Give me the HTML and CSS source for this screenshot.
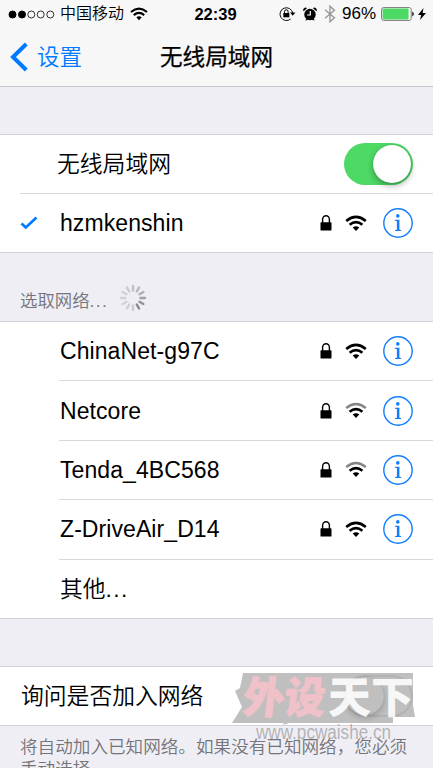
FILE: index.html
```html
<!DOCTYPE html>
<html lang="zh-CN">
<head>
<meta charset="utf-8">
<title>无线局域网</title>
<link rel="stylesheet" href="styles.css">
</head>
<body>
<svg class="defs" aria-hidden="true">
  <symbol id="wifi" viewBox="0 0 22 17">
    <path d="M1.2 6Q11-2.1 20.8 6" fill="none" stroke="currentColor" stroke-width="2.6"/>
    <path d="M4.6 9.8Q11 4.5 17.4 9.8" fill="none" stroke="currentColor" stroke-width="2.6"/>
    <path d="M7.7 12.6Q11 10 14.3 12.6L11 16Z" fill="currentColor"/>
  </symbol>
  <symbol id="wifi-weak" viewBox="0 0 22 17">
    <path d="M1.2 6Q11-2.1 20.8 6" fill="none" stroke="#858585" stroke-width="2.4"/>
    <path d="M4.6 9.8Q11 4.5 17.4 9.8" fill="none" stroke="currentColor" stroke-width="2.6"/>
    <path d="M7.7 12.6Q11 10 14.3 12.6L11 16Z" fill="currentColor"/>
  </symbol>
  <symbol id="lock" viewBox="0 0 12 16">
    <path d="M2.6 8V4.4a3.4 3.6 0 0 1 6.8 0V8" fill="none" stroke="#000" stroke-width="1.4"/>
    <rect x=".5" y="7.3" width="11" height="8.2" rx=".6"/>
  </symbol>
  <symbol id="info" viewBox="0 0 30 30">
    <circle cx="15" cy="15" r="14.2" fill="none" stroke="#117dff" stroke-width="1.4"/>
    <circle cx="14.8" cy="7.9" r="1.8" fill="#117dff"/>
    <path d="M11.9 11.7h4.5v10.1l1.7.3v.9h-6v-.9l1.8-.3v-8.7l-2-.4z" fill="#117dff"/>
  </symbol>
</svg>

<header class="header">
  <div class="status">
    <div class="carrier">
      <svg class="signal" viewBox="0 0 47 9"><g stroke="#000"><circle cx="4.5" cy="4.5" r="3.5"/><circle cx="14" cy="4.5" r="3.5"/><g fill="none" stroke-width=".8"><circle cx="23.3" cy="4.5" r="3.5"/><circle cx="32.7" cy="4.5" r="3.5"/><circle cx="42.3" cy="4.5" r="3.5"/></g></g></svg>
      <span class="operator">中国移动</span>
      <svg class="status-wifi"><use href="#wifi"/></svg>
    </div>
    <time class="clock">22:39</time>
    <div class="indicators">
      <svg class="rotation" viewBox="0 0 17 16"><path d="M11.6 13A6.4 6.4 0 1 1 13.7 7" fill="none" stroke="#111"/><path d="M11 6.6h5.4l-2.7 3.2z"/><rect x="4.3" y="7" width="6" height="4.3"/><path d="M5.5 7V5.6a1.8 1.8 0 0 1 3.6 0V7" fill="none" stroke="#000"/></svg>
      <svg class="alarm" viewBox="0 0 14 14"><circle cx="7" cy="7.5" r="5.7"/><path d="M.6 4.2a2.3 2.3 0 0 1 3.4-3zM13.4 4.2a2.3 2.3 0 0 0-3.4-3zM2.1 13.3l2-2 1 .9-1 1.1zM11.9 13.3l-2-2-1 .9 1 1.1z"/><path d="M7.3 4v4H4" fill="none" stroke="#fff" stroke-width="1.2"/></svg>
      <svg class="bluetooth" viewBox="0 0 12 18"><path d="M1 4.8l9.4 8L6 16.8V1.2l4.4 4L1 13.2" fill="none" stroke="#999" stroke-width="1.4"/></svg>
      <span class="percent">96%</span>
      <svg class="battery" viewBox="0 0 34 14"><rect x=".6" y=".6" width="29.6" height="12.8" rx="2" fill="#fff" stroke="#777"/><rect x="1.6" y="1.6" width="26" height="10.8" rx=".8" fill="#4cd964"/><path d="M31.3 4.5q3 2.5 0 5z"/></svg>
      <svg class="bolt" viewBox="0 0 8 12"><path d="M5.5 0L0 7h3.2L2 12l6-7H4.6z"/></svg>
    </div>
  </div>
  <nav class="nav">
    <a class="back"><svg class="chevron" viewBox="0 0 18 30"><path d="M16.3 2L3 15l13.3 13" fill="none" stroke="#007aff" stroke-width="4"/></svg><span>设置</span></a>
    <h1 class="title">无线局域网</h1>
  </nav>
</header>

<main>
  <section class="group current">
    <div class="row switch-row"><span class="name cjk">无线局域网</span><span class="toggle on"><span class="knob"></span></span></div>
    <div class="row">
      <svg class="check" viewBox="0 0 18 14"><path d="M1.5 7.5l4.3 4L16.5 1.4" fill="none" stroke="#007aff" stroke-width="2.7"/></svg>
      <span class="name">hzmkenshin</span><svg class="lock"><use href="#lock"/></svg><svg class="wifi"><use href="#wifi"/></svg><svg class="info"><use href="#info"/></svg>
    </div>
  </section>

  <div class="section-head">
    <span>选取网络<span class="dots">...</span></span>
    <svg class="spinner" viewBox="-14 -14 28 28"><g stroke-width="2.4" stroke-linecap="round">
      <path d="M0-7.5V-12" stroke="#c2c2c6"/><path d="M0-7.5V-12" stroke="#b8b8bc" transform="rotate(30)"/><path d="M0-7.5V-12" stroke="#aeaeb2" transform="rotate(60)"/><path d="M0-7.5V-12" stroke="#a0a0a4" transform="rotate(90)"/><path d="M0-7.5V-12" stroke="#939397" transform="rotate(120)"/><path d="M0-7.5V-12" stroke="#88888c" transform="rotate(150)"/><path d="M0-7.5V-12" stroke="#cdcdd1" transform="rotate(180)"/><path d="M0-7.5V-12" stroke="#d0d0d4" transform="rotate(210)"/><path d="M0-7.5V-12" stroke="#d1d1d5" transform="rotate(240)"/><path d="M0-7.5V-12" stroke="#d1d1d5" transform="rotate(270)"/><path d="M0-7.5V-12" stroke="#d0d0d4" transform="rotate(300)"/><path d="M0-7.5V-12" stroke="#cbcbcf" transform="rotate(330)"/>
    </g></svg>
  </div>

  <section class="group networks">
    <div class="row"><span class="name">ChinaNet-g97C</span><svg class="lock"><use href="#lock"/></svg><svg class="wifi"><use href="#wifi"/></svg><svg class="info"><use href="#info"/></svg></div>
    <div class="row"><span class="name">Netcore</span><svg class="lock"><use href="#lock"/></svg><svg class="wifi"><use href="#wifi-weak"/></svg><svg class="info"><use href="#info"/></svg></div>
    <div class="row"><span class="name">Tenda_4BC568</span><svg class="lock"><use href="#lock"/></svg><svg class="wifi"><use href="#wifi-weak"/></svg><svg class="info"><use href="#info"/></svg></div>
    <div class="row"><span class="name">Z-DriveAir_D14</span><svg class="lock"><use href="#lock"/></svg><svg class="wifi"><use href="#wifi"/></svg><svg class="info"><use href="#info"/></svg></div>
    <div class="row"><span class="name cjk">其他<span class="dots">...</span></span></div>
  </section>

  <section class="group ask">
    <div class="row"><span class="name cjk">询问是否加入网络</span><span class="toggle"><span class="knob"></span></span></div>
    <svg class="watermark" viewBox="0 0 190 80">
      <path d="M13 7H183V39L185 51H163V57H59L53 59L54 57H2L12 41L5 25L10 22Z" fill="#858585" fill-opacity=".52"/>
      <g class="wm-title">
        <text transform="skewX(-6)" x="17" y="47" fill="#f0c1c8" stroke="#f0c1c8" textLength="82" lengthAdjust="spacingAndGlyphs">外设</text>
        <text x="98" y="47" fill="#fff" fill-opacity=".88" textLength="86" lengthAdjust="spacingAndGlyphs">天下</text>
      </g>
      <text class="wm-url" transform="translate(26 73) scale(1 1.15)" textLength="135" lengthAdjust="spacingAndGlyphs">www.pcwaishe.cn</text>
    </svg>
  </section>
  <p class="note">将自动加入已知网络。如果没有已知网络，您必须<br>手动选择</p>
</main>
</body>
</html>
```
FILE: styles.css
```css
* { box-sizing: border-box; }
html, body { height: 768px; overflow: hidden; }
body {
  margin: 0;
  background: #efeef4;
  color: #000;
  font-family: "Liberation Sans", "Noto Sans CJK SC", sans-serif;
}
svg { display: block; flex: none; }
.defs { position: absolute; width: 0; height: 0; }

.header { height: 87px; background: #f7f7f7; border-bottom: 1px solid #c7c7cb; }
.status { height: 28px; display: grid; grid-template-columns: 1fr auto 1fr; align-items: center; padding: 0 7px 0 8px; }
.carrier { display: flex; align-items: center; }
.signal { width: 47px; height: 9px; }
.operator { margin-left: 5px; font-size: 16px; line-height: 24px; font-weight: 350; }
.status-wifi { width: 18px; height: 14px; margin-left: 6px; }
.clock { font-size: 16.5px; font-weight: 700; margin-right: 3px; }
.indicators { display: flex; align-items: center; justify-content: flex-end; }
.rotation { width: 17px; height: 16px; }
.alarm { width: 14px; height: 14px; margin-left: 7px; }
.bluetooth { width: 12px; height: 18px; margin-left: 7px; }
.percent { margin-left: 6px; font-size: 17px; }
.battery { width: 34px; height: 14px; margin-left: 5px; }
.bolt { width: 8px; height: 12px; margin-left: 3px; }

.nav { height: 58px; display: grid; grid-template-columns: 1fr auto 1fr; align-items: center; padding-left: 10px; }
.back { display: flex; align-items: center; gap: 9px; color: #007aff; font-size: 22.5px; font-weight: 350; line-height: 32px; }
.back span { margin-top: 2px; }
.chevron { width: 18px; height: 30px; }
.title { margin: 2px 0 0; padding-right: 10px; font-size: 22.6px; line-height: 32px; font-weight: 400; -webkit-text-stroke: .25px #000; }

.group { position: relative; background: #fff; border-top: 1px solid #d3d3d7; border-bottom: 1px solid #d3d3d7; }
.current { height: 119px; margin-top: 47px; }
.row { height: 59.4px; margin-left: 59px; padding-right: 20px; display: flex; align-items: center; border-bottom: 1px solid #d9d9dc; }
.row:last-of-type { border-bottom: 0; height: 58.4px; }
.name { flex: 1; padding-left: 1px; font-size: 23px; line-height: 34px; letter-spacing: .08px; }
.cjk { font-size: 22.8px; font-weight: 350; letter-spacing: 0; }
.current .row { margin-left: 20px; padding-left: 39px; position: relative; }
.current .switch-row { height: 59px; }
.switch-row .name { margin-left: -3px; }
.check { position: absolute; left: 0; top: 22px; width: 18px; height: 14px; }
.lock { width: 12px; height: 16px; margin-right: 13px; }
.wifi { width: 22px; height: 17px; margin-right: 16px; }
.info { width: 30px; height: 30px; }

.toggle { width: 69px; height: 42px; border-radius: 21px; padding: 2px; display: flex; }
.toggle.on { background: #4cd964; justify-content: flex-end; }
.knob { width: 38px; height: 38px; border-radius: 50%; background: #fff; box-shadow: 0 3px 6px rgba(0,0,0,.3), 0 0 1px rgba(0,0,0,.3); }

.section-head { height: 68px; display: flex; align-items: center; padding: 24px 0 0 20px; color: #74747a; font-size: 17.4px; font-weight: 350; }
.dots { letter-spacing: 1.4px; }
.spinner { width: 28px; height: 28px; margin: -2px 0 0 11px; }
.networks { height: 298px; }
.ask { height: 60px; margin-top: 47px; }
.ask .row { margin-left: 20px; }
.ask .toggle { box-shadow: inset 0 0 0 2px #e5e5e5; }
.watermark { position: absolute; left: 230px; top: -1px; width: 190px; height: 80px; z-index: 1; }
.wm-title { font: 900 43px "Noto Sans CJK SC", sans-serif; }
.wm-url { font: 17px "Liberation Sans", sans-serif; fill: #8a8a8a; fill-opacity: .6; }
.note { margin: 0; padding: 10px 0 0 20px; color: #74747a; font-size: 17.6px; line-height: 22px; font-weight: 350; white-space: nowrap; }
```
